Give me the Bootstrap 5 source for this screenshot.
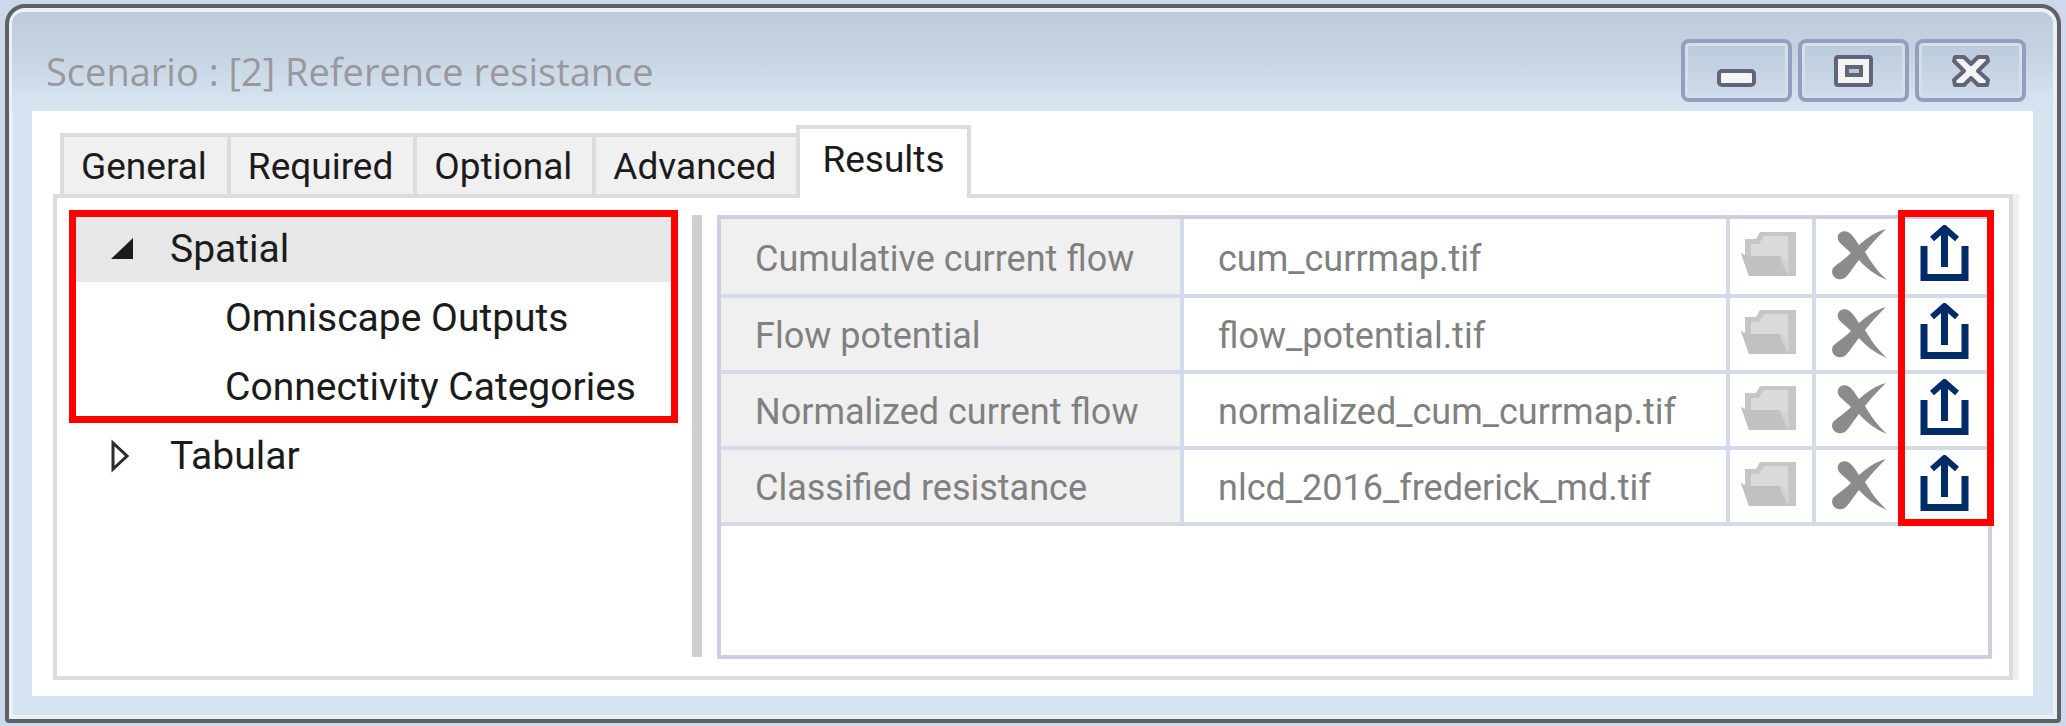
<!DOCTYPE html>
<html lang="en">
<head>
<meta charset="utf-8">
<meta name="viewport" content="width=device-width, initial-scale=1">
<title>Scenario : [2] Reference resistance</title>
<link href="https://cdn.jsdelivr.net/npm/bootstrap@5.3.0/dist/css/bootstrap.min.css" rel="stylesheet">
<style>
  :root { --line: #dcdcdc; --grid: #d3dae8; --frame: #cfcde0; }
  body { background: #cdd9ea; padding: 4px 5px 3px; color: #1b1b1b;
         font-family: Roboto, "Liberation Sans", Arial, sans-serif; font-size: 37px; line-height: 52px; }
  .window { border: 4px solid #5f6263; border-radius: 20px 20px 4px 4px; background: #d6e4f1; box-shadow: inset 0 0 0 4px #e9f0fa; padding: 4px 24px 23px 23px; }
  .title-bar { height: 99px; margin: 0 -20px; padding: 18px 27px 0 34px; border-radius: 12px 12px 0 0; background: linear-gradient(#bccbdb, #c5d3e1 40%, #d6e4f1 92%); }
  .title-text { font-family: "Open Sans", "Noto Sans", sans-serif; font-size: 38px; color: #98989e; margin: 0; line-height: 52px; }
  .caption-group { gap: 6px; }
  .caption-btn { width: 111px; height: 63px; border: 4px solid #929fbd; border-radius: 8px; box-shadow: inset 0 0 0 3px #d3dfec; background: linear-gradient(#bccbdb, #cddbea); padding: 0; }
  .caption-btn svg { display: block; margin: 0 auto; }
  .client { background: #fff; padding: 14px 14px 16px 21px; }
  .tab-strip { padding-left: 7px; margin-bottom: -4px; position: relative; z-index: 1; }
  .tab-btn { background: #f0f0f0; border: solid var(--line); border-width: 4px 0 4px 4px; height: 65px; padding: 3px 20px 0 17px; line-height: 52px; color: inherit; }
  .tab-btn.active { background: #fff; border-width: 4px 4px 0; height: 73px; padding: 0 22px 8px; }
  .pane { border: 4px solid var(--line); box-shadow: 6px 0 0 #efefef; margin-right: 6px; padding: 15px 17px 17px 12px; }
  .tree { width: 609px; }
  .tree ul { list-style: none; margin: 0; padding: 0; }
  .tree-row { display: flex; align-items: center; width: 100%; height: 69px; border: 0; background: none; padding: 2px 0 0 42px; color: inherit; text-align: left; font-size: 39px; }
  .tree-row svg { width: 24px; height: 34px; margin-right: 35px; }
  .tree-row.child { padding-left: 156px; }
  .tree-row.selected { background: #e7e7e7; }
  .marked { position: relative; }
  .marked::after, .mark-col { content: ""; position: absolute; inset: -3px 0; border: 7px solid #f00; pointer-events: none; }
  .splitter { width: 10px; background: #cfcfcf; margin: 2px 15px 2px 14px; }
  .grid-box { border: 4px solid var(--frame); min-height: 444px; margin-top: 2px; }
  .grid-box table { width: 100%; table-layout: fixed; border-collapse: separate; border-spacing: 0; color: #808080; font-size: 36px; }
  .grid-box th, .grid-box td { height: 76px; padding: 4px 0 0 34px; border: solid var(--grid); border-width: 0 4px 4px 0; font-weight: 400; white-space: nowrap; }
  .grid-box tr:first-child > * { height: 79px; }
  .grid-box th { width: 463px; background: #f0f0f0; }
  .grid-box td.tool { width: 86px; padding: 0 0 5px; text-align: center; }
  .grid-box td:last-child { border-right: 0; }
  .tool button { border: 0; background: none; padding: 0; display: flex; width: 100%; justify-content: center; align-items: center; }
  .tool .open-btn { padding-right: 6px; }
  .tool .clear-btn { padding-left: 5px; }
  .grid-wrap { position: relative; }
  .mark-col { inset: -9px -6px 0 auto; width: 96px; }
</style>
</head>
<body>
<svg width="0" height="0" class="d-none" aria-hidden="true">
  <symbol id="folder" viewBox="0 0 55 44">
    <path fill="#c6c6c6" d="M4 7h11l4-7h36v44H8L0 21l4 2z"/>
    <path fill="#dadada" d="M10 12h8l5-8h24v34l-7-14H10z"/>
    <path fill="#c1c1c1" d="M0 21l4 3h34l8 20H8z"/>
    <path fill="#d2d2d2" d="M38 24l8 17h2V30z"/>
  </symbol>
  <symbol id="erase" viewBox="0 0 55 52">
    <path fill="#8b8b8b" d="M19 25 8 15C2 8 9 1 16 4c4 2 7 7 11 13C35 10 43 4 54 1 46 9 39 16 33 24c6 10 12 19 22 28C43 47 34 40 27 32c-5 6-9 13-13 17C7 55-3 48 1 40c4-4 11-8 18-15z"/>
  </symbol>
  <symbol id="export" viewBox="0 0 50 58">
    <g fill="none" stroke="#002b69"><path stroke-width="7" d="M4 21v31.500h41V21M24.500 42V5"/><path stroke-width="6" d="M12 14 24.500 3 37 14"/></g>
  </symbol>
</svg>
<main class="window">
  <header class="title-bar d-flex align-items-center justify-content-between">
    <h1 class="title-text fw-normal">Scenario : [2] Reference resistance</h1>
    <div class="d-flex caption-group">
      <button class="caption-btn" type="button" aria-label="Minimize"><svg width="40" height="34" viewBox="0 0 40 34"><rect x="2" y="17" width="35" height="14" rx="3" fill="#f4f4f4" stroke="#626577" stroke-width="4"/></svg></button>
      <button class="caption-btn" type="button" aria-label="Restore"><svg width="40" height="34" viewBox="0 0 40 34"><rect x="2" y="3" width="35" height="28" rx="2" fill="#f4f4f4" stroke="#626577" stroke-width="4"/><rect x="13" y="13" width="14" height="8" fill="#b9c8d9" stroke="#626577" stroke-width="4"/></svg></button>
      <button class="caption-btn" type="button" aria-label="Close"><svg width="40" height="34" viewBox="0 0 40 34"><path d="M4 3h9l7 7 7-7h9l1 4-10 10 10 9-1 5h-9l-7-7-7 7H4l-1-5 10-9L3 7z" fill="#f4f4f4" stroke="#626577" stroke-width="4" stroke-linejoin="round"/></svg></button>
    </div>
  </header>
  <section class="client">
    <div class="tab-strip d-flex align-items-end" role="tablist">
      <button class="tab-btn" type="button" role="tab">General</button>
      <button class="tab-btn" type="button" role="tab">Required</button>
      <button class="tab-btn" type="button" role="tab">Optional</button>
      <button class="tab-btn" type="button" role="tab">Advanced</button>
      <button class="tab-btn active" type="button" role="tab" aria-selected="true">Results</button>
    </div>
    <div class="pane d-flex" role="tabpanel">
      <nav class="tree flex-shrink-0" aria-label="Results">
        <ul>
          <li class="marked">
            <button class="tree-row selected" type="button" aria-expanded="true"><svg viewBox="0 0 24 34"><path d="M0 27 22 6v21z" fill="#1b1b1b"/></svg>Spatial</button>
            <ul>
              <li><button class="tree-row child" type="button">Omniscape Outputs</button></li>
              <li><button class="tree-row child" type="button">Connectivity Categories</button></li>
            </ul>
          </li>
          <li><button class="tree-row" type="button" aria-expanded="false"><svg viewBox="0 0 24 34"><path d="M2 4v26l14-13z" fill="none" stroke="#2b2b2b" stroke-width="3"/></svg>Tabular</button></li>
        </ul>
      </nav>
      <div class="splitter flex-shrink-0"></div>
      <div class="grid-box flex-grow-1">
        <div class="grid-wrap">
        <table>
          <tbody>
            <tr><th scope="row">Cumulative current flow</th><td>cum_currmap.tif</td>
              <td class="tool"><button class="open-btn" type="button" aria-label="Open"><svg width="55" height="44"><use href="#folder"/></svg></button></td>
              <td class="tool"><button class="clear-btn" type="button" aria-label="Clear"><svg width="55" height="52"><use href="#erase"/></svg></button></td>
              <td class="tool"><button type="button" aria-label="Export"><svg width="50" height="58"><use href="#export"/></svg></button></td></tr>
            <tr><th scope="row">Flow potential</th><td>flow_potential.tif</td>
              <td class="tool"><button class="open-btn" type="button" aria-label="Open"><svg width="55" height="44"><use href="#folder"/></svg></button></td>
              <td class="tool"><button class="clear-btn" type="button" aria-label="Clear"><svg width="55" height="52"><use href="#erase"/></svg></button></td>
              <td class="tool"><button type="button" aria-label="Export"><svg width="50" height="58"><use href="#export"/></svg></button></td></tr>
            <tr><th scope="row">Normalized current flow</th><td>normalized_cum_currmap.tif</td>
              <td class="tool"><button class="open-btn" type="button" aria-label="Open"><svg width="55" height="44"><use href="#folder"/></svg></button></td>
              <td class="tool"><button class="clear-btn" type="button" aria-label="Clear"><svg width="55" height="52"><use href="#erase"/></svg></button></td>
              <td class="tool"><button type="button" aria-label="Export"><svg width="50" height="58"><use href="#export"/></svg></button></td></tr>
            <tr><th scope="row">Classified resistance</th><td>nlcd_2016_frederick_md.tif</td>
              <td class="tool"><button class="open-btn" type="button" aria-label="Open"><svg width="55" height="44"><use href="#folder"/></svg></button></td>
              <td class="tool"><button class="clear-btn" type="button" aria-label="Clear"><svg width="55" height="52"><use href="#erase"/></svg></button></td>
              <td class="tool"><button type="button" aria-label="Export"><svg width="50" height="58"><use href="#export"/></svg></button></td></tr>
          </tbody>
        </table>
        <div class="mark-col"></div>
        </div>
      </div>
    </div>
  </section>
</main>
<script src="https://cdn.jsdelivr.net/npm/bootstrap@5.3.0/dist/js/bootstrap.bundle.min.js"></script>
</body>
</html>
